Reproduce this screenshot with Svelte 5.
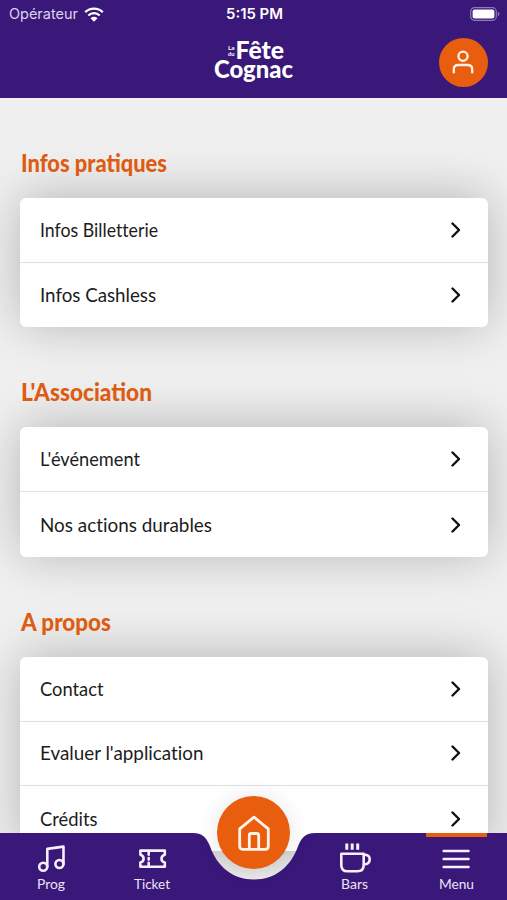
<script>
  const sections = [
    {
      title: 'Infos pratiques',
      width: 146,
      items: [
        {label: 'Infos Billetterie', width: 118},
        {label: 'Infos Cashless', width: 116},
      ],
    },
    {
      title: "L'Association",
      width: 131,
      items: [
        {label: "L'événement", width: 100},
        {label: 'Nos actions durables', width: 172},
      ],
    },
    {
      title: 'A propos',
      width: 90,
      items: [
        {label: 'Contact', width: 63.5},
        {label: "Evaluer l'application", width: 163.5},
        {label: 'Crédits', width: 57.5},
      ],
    },
  ];

  const tabs = [
    {id: 'prog', label: 'Prog', width: 28},
    {id: 'ticket', label: 'Ticket', width: 36},
    {id: 'home', label: '', width: 0},
    {id: 'bars', label: 'Bars', width: 27},
    {id: 'menu', label: 'Menu', width: 35},
  ];

  let active = $state('menu');
</script>

<!-- text stretched to a fixed width, baseline at y -->
{#snippet fit(text, width, height, y)}
  <svg class="fit" {width} {height} role="img" aria-label={text}>
    <text x="0" {y} textLength={width} lengthAdjust="spacingAndGlyphs">{text}</text>
  </svg>
{/snippet}

<div class="app">
  <header>
    <div class="status">
      <div class="carrier">
        {@render fit('Opérateur', 69, 20, 15)}
        <svg class="wifi" width="20" height="15" viewBox="0 0 20 15">
          <path d="M1.2 5.2C6.2.4 13.8.4 18.8 5.2M4.3 8.5c3.3-3.1 8.1-3.1 11.4 0" />
          <path class="dot" d="M6.5 11.2c2.1-1.8 4.9-1.8 7 0L10 14.7z" />
        </svg>
      </div>
      <div class="time">{@render fit('5:15 PM', 57, 20, 15)}</div>
      <svg class="battery" width="30" height="14" viewBox="0 0 30 14">
        <rect class="case" x=".7" y=".7" width="25.6" height="12.6" rx="3.8" />
        <rect class="level" x="2.6" y="2.6" width="21.8" height="8.8" rx="2" />
        <path class="tip" d="M27.8 4.8c2.2.8 2.2 3.6 0 4.4z" />
      </svg>
    </div>

    <div class="bar">
      <svg class="logo" width="80" height="46" viewBox="0 0 80 46">
        <text class="tiny" x="14" y="10.5" textLength="6.5" lengthAdjust="spacingAndGlyphs">La</text>
        <text class="tiny" x="14" y="17" textLength="6.5" lengthAdjust="spacingAndGlyphs">du</text>
        <text x="21.5" y="20.2" textLength="48.5" lengthAdjust="spacingAndGlyphs">Fête</text>
        <text x="0" y="38.7" textLength="79" lengthAdjust="spacingAndGlyphs">Cognac</text>
      </svg>
      <button class="profile" aria-label="Profil">
        <svg width="24" height="24" viewBox="0 0 24 24">
          <circle cx="12" cy="6.3" r="4.6" />
          <path d="M2.8 22.4v-3q0-4.4 4.4-4.4h9.6q4.4 0 4.4 4.4v3" />
        </svg>
      </button>
    </div>
  </header>

  <main>
    {#each sections as section}
      <section>
        <h2>{@render fit(section.title, section.width, 36, 26)}</h2>
        <ul>
          {#each section.items as item}
            <li>
              {@render fit(item.label, item.width, 26, 19.5)}
              <svg class="chevron" width="10" height="16" viewBox="0 0 10 16">
                <path d="M1.5 1.5 8 8l-6.5 6.5" />
              </svg>
            </li>
          {/each}
        </ul>
      </section>
    {/each}
  </main>

  <nav>
    <svg class="shape" width="507" height="68" viewBox="0 0 507 68">
      <path d="M0 0H193C202 0 206 4 209.5 12C217 34 233 46.5 254 46.5C275 46.5 291 34 298.5 12C302 4 306 0 315 0H507V68H0z" />
    </svg>
    {#each tabs as tab}
      {#if tab.id === 'home'}
        <button class="home" aria-label="Accueil" onclick={() => active = tab.id}>
          <svg width="34" height="36" viewBox="0 0 34 36">
            <path d="M2.7 13.8 17 2.2 31.3 13.8v17.5q0 3-3 3H5.7q-3 0-3-3z" />
            <path d="M12.3 34V20.5q0-2 2-2h5.4q2 0 2 2V34" />
          </svg>
        </button>
      {:else}
        <button class="tab" class:active={active === tab.id} onclick={() => active = tab.id}>
          <svg class="icon" width="32" height="32" viewBox="0 0 32 32">
            {#if tab.id === 'prog'}
              <circle cx="8.2" cy="24.7" r="4" />
              <circle cx="24.4" cy="22" r="4" />
              <path d="M12.3 24.7V6.9L28.5 4.6V22" />
            {:else if tab.id === 'ticket'}
              <path d="M4.4 8.6h24.4v4.2q-3.3 1-3.3 3.9t3.3 3.9v4.2H4.4v-4.2q3.2-1 3.2-3.9t-3.2-3.9zM12.7 9v3.8M12.7 20.7v3.8M12.7 16v1.6" />
            {:else if tab.id === 'bars'}
              <path d="M2.3 11.8h22.4V23q0 6.3-6.3 6.3H8.6q-6.3 0-6.3-6.3zM24.7 12.7h2q4 .7 4 4.7 0 4.7-6.2 5.1" />
              <path class="steam" d="M7.8 1.5v6.2M13.2 1.5v6.2M18.7 1.5v6.2" />
            {:else}
              <path d="M3.7 9h24.8M3.7 17h24.8M3.7 25h24.8" />
            {/if}
          </svg>
          {@render fit(tab.label, tab.width, 20, 14.7)}
        </button>
      {/if}
    {/each}
  </nav>
</div>

<style>
  :global(body) {
    margin: 0;
  }

  .app {
    position: relative;
    width: 507px;
    height: 900px;
    overflow: hidden;
    background: #f0f0f0;
    font-family: Lato, sans-serif;
  }

  svg {
    display: block;
    flex: none;
    fill: none;
    stroke-linecap: round;
    stroke-linejoin: round;
  }

  .fit {
    overflow: visible;
    fill: currentColor;
  }

  button {
    padding: 0;
    border: 0;
    background: none;
    color: inherit;
    font: inherit;
    cursor: pointer;
  }

  header {
    position: relative;
    z-index: 1;
    height: 98px;
    background: #3a1879;
    color: #fff;
  }

  .status {
    display: grid;
    grid-template-columns: 1fr auto 1fr;
    align-items: center;
    height: 20px;
    padding: 4px 7px 0 8.5px;
    font-family: Inter, sans-serif;
    font-size: 14.5px;
  }

  .carrier {
    display: flex;
    align-items: center;
    gap: 6px;
    color: #dcd3ee;
  }

  .wifi {
    stroke: #fff;
    stroke-width: 2.3;
    stroke-linecap: butt;
  }

  .dot {
    fill: #fff;
    stroke: none;
  }

  .time {
    font-weight: 600;
  }

  .battery {
    justify-self: end;
  }

  .case {
    stroke: #8f7bb8;
    stroke-width: 1.2;
  }

  .level {
    fill: #fff;
  }

  .tip {
    fill: #8f7bb8;
  }

  .bar {
    display: grid;
    grid-template-columns: 1fr auto 1fr;
    align-items: center;
    height: 49px;
    padding: 13.5px 19.5px 0;
  }

  .logo {
    grid-column: 2;
    overflow: visible;
    fill: #fff;
    font-size: 24px;
    font-weight: 900;
  }

  .tiny {
    font-size: 6px;
    font-weight: 700;
  }

  .profile {
    display: grid;
    place-items: center;
    justify-self: end;
    width: 49px;
    height: 49px;
    border-radius: 50%;
    background: #e95d0f;
  }

  .profile svg {
    stroke: #fff1e4;
    stroke-width: 2.3;
  }

  main {
    padding-top: 0.1px;
  }

  h2 {
    box-sizing: border-box;
    height: 100px;
    margin: 0;
    padding: 48px 0 0 21px;
    color: #dd5c12;
    font-size: 25.5px;
    font-weight: 900;
  }

  ul {
    margin: 0 19.5px 0 20.3px;
    padding: 0;
    border-radius: 6px;
    background: #fff;
    box-shadow: 0 -2px 50px rgba(0, 0, 0, 0.25);
    list-style: none;
  }

  li {
    display: flex;
    align-items: center;
    justify-content: space-between;
    box-sizing: border-box;
    height: 64.7px;
    padding: 0 27px 0 20px;
    border-bottom: 1px solid #e0e0e0;
    color: #1c1c1c;
    font-size: 19px;
    font-variant-ligatures: none;
  }

  li:last-child {
    border-bottom: 0;
  }

  .chevron {
    stroke: #111;
    stroke-width: 2.4;
  }

  nav {
    position: absolute;
    bottom: 0;
    left: 0;
    display: grid;
    grid-template-columns: repeat(5, 1fr);
    width: 507px;
    height: 67.5px;
    color: #fff;
  }

  .shape {
    position: absolute;
    top: 0;
    left: 0;
    fill: #3a1879;
  }

  .tab {
    position: relative;
    display: flex;
    flex-direction: column;
    align-items: center;
    padding-top: 9px;
    color: #ece4f6;
    font-size: 13.5px;
  }

  .tab.active::before {
    content: '';
    position: absolute;
    top: 0;
    width: 61px;
    height: 4px;
    background: #e95d0f;
  }

  .icon {
    stroke: #f6effc;
    stroke-width: 2.6;
  }

  .steam {
    stroke-linecap: butt;
    stroke-width: 3;
  }

  .home {
    position: relative;
    display: grid;
    place-items: center;
    justify-self: center;
    width: 73px;
    height: 73px;
    margin: -36.5px 0 0 1px;
    border-radius: 50%;
    background: #e95d0f;
    box-shadow: 0 0 22px rgba(0, 0, 0, 0.1);
  }

  .home svg {
    stroke: #fff3e8;
    stroke-width: 2.8;
  }
</style>
